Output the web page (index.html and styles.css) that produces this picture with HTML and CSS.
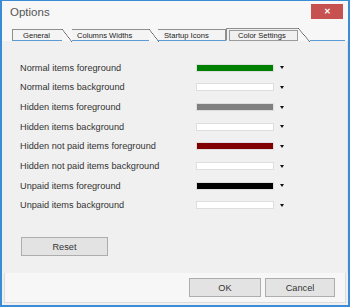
FILE: index.html
```html
<!DOCTYPE html>
<html lang="en">
<head>
  <meta charset="UTF-8">
  <title>Options</title>
  <link rel="stylesheet" href="styles.css">
</head>
<body>

  <div class="window">
    <!-- Title bar -->
    <div class="titlebar">
      <span class="title">Options</span>
      <button class="close">&#x2715;</button>
    </div>

    <!-- Tabs -->
    <div class="tabs">
      <div class="tab tab-general">General</div>
      <div class="tab tab-columns">Columns Widths</div>
      <div class="tab tab-startup">Startup Icons</div>
      <div class="tab tab-color active"><span>Color Settings</span></div>
      <div class="tab-rest"></div>
    </div>

    <!-- Color settings -->
    <div class="panel">
      <div class="row">
        <span class="label">Normal items foreground</span>
        <span class="swatch" style="background: #008000"></span>
        <span class="arrow"></span>
      </div>
      <div class="row">
        <span class="label">Normal items background</span>
        <span class="swatch" style="background: #ffffff"></span>
        <span class="arrow"></span>
      </div>
      <div class="row">
        <span class="label">Hidden items foreground</span>
        <span class="swatch" style="background: #808080"></span>
        <span class="arrow"></span>
      </div>
      <div class="row">
        <span class="label">Hidden items background</span>
        <span class="swatch" style="background: #ffffff"></span>
        <span class="arrow"></span>
      </div>
      <div class="row">
        <span class="label">Hidden not paid items foreground</span>
        <span class="swatch" style="background: #800000"></span>
        <span class="arrow"></span>
      </div>
      <div class="row">
        <span class="label">Hidden not paid items background</span>
        <span class="swatch" style="background: #ffffff"></span>
        <span class="arrow"></span>
      </div>
      <div class="row">
        <span class="label">Unpaid items foreground</span>
        <span class="swatch" style="background: #000000"></span>
        <span class="arrow"></span>
      </div>
      <div class="row">
        <span class="label">Unpaid items background</span>
        <span class="swatch" style="background: #ffffff"></span>
        <span class="arrow"></span>
      </div>

      <button class="btn btn-reset">Reset</button>
    </div>

    <!-- Dialog buttons -->
    <div class="footer">
      <button class="btn btn-ok">OK</button>
      <button class="btn btn-cancel">Cancel</button>
    </div>
  </div>

</body>
</html>
```

FILE: styles.css
```css
body {
  margin: 0;
  font-family: "Liberation Sans", Arial, sans-serif;
  background: #ffffff;
}

.window {
  width: 350px;
  height: 307px;
  box-sizing: border-box;
  border: 2px solid #3c8bd6;
  border-top-width: 1px;
  background: #f0f0f0;
  display: flex;
  flex-direction: column;
}

.titlebar {
  height: 24px;
  display: flex;
  align-items: flex-start;
  background: #f7f7f7;
}

.title {
  margin: 5px 0 0 8px;
  font-size: 11.5px;
  color: #555;
}

.close {
  margin: 3px 5px 0 auto;
  width: 32px;
  height: 15px;
  padding: 0;
  border: none;
  background: #c75050;
  color: #fff;
  font-size: 8px;
  font-weight: bold;
  line-height: 15px;
}

.tabs {
  display: flex;
  align-items: flex-end;
  height: 14px;
  padding: 2px 0 0 10px;
  background: #f7f7f7;
}

.tab {
  position: relative;
  height: 12px;
  box-sizing: border-box;
  border-top: 1px solid #8f8f8f;
  border-bottom: 1px solid #5b9bd5;
  background: #f4f4f4;
  font-size: 7.6px;
  color: #222;
  line-height: 11px;
  padding-left: 10px;
}

.tab::after {
  content: "";
  position: absolute;
  top: -1px;
  right: -10px;
  width: 10px;
  height: 13px;
  background: linear-gradient(to top right, transparent calc(50% - 0.6px), #555 50%, transparent calc(50% + 0.6px));
}

.tab-general {
  width: 50px;
  border-left: 1px solid #8f8f8f;
  margin-right: 10px;
}

.tab-columns {
  width: 77px;
  margin-right: 9px;
  padding-left: 5px;
}

.tab-startup {
  width: 68px;
  padding-left: 6px;
  border-right: 1px solid #8f8f8f;
}

.tab-startup::after {
  display: none;
}

.tab-color {
  width: 72px;
  height: 13px;
  border-left: 1px solid #8f8f8f;
  border-bottom-color: #f0f0f0;
  padding: 1px 0 0 2px;
  background: #f0f0f0;
  margin-right: 12px;
}

.tab-color::after {
  top: -1px;
  right: -12px;
  width: 12px;
  height: 14px;
}

.tab-color span {
  display: block;
  height: 9px;
  border: 1px solid #9a9a9a;
  line-height: 9px;
  padding-left: 8px;
}

.tab-rest {
  flex: 1;
  height: 1px;
  background: #5b9bd5;
  margin-right: 3px;
}

.panel {
  flex: 1;
  padding: 17px 0 0 18px;
  background: #f0f0f0;
  border-right: 1px solid #e4e4e4;
}

.row {
  display: flex;
  align-items: center;
  height: 19.65px;
}

.label {
  width: 176px;
  font-size: 9.2px;
  color: #333;
}

.swatch {
  width: 78px;
  height: 8px;
  box-sizing: border-box;
  border: 1px solid #dedede;
}

.arrow {
  margin-left: 6px;
  width: 0;
  height: 0;
  border-left: 2.5px solid transparent;
  border-right: 2.5px solid transparent;
  border-top: 3px solid #111;
}

.btn {
  height: 19px;
  padding: 0;
  border: 1px solid #adadad;
  background: #e3e3e3;
  font-family: "Liberation Sans", Arial, sans-serif;
  font-size: 9.2px;
  color: #333;
}

.btn-reset {
  width: 87px;
  margin: 22px 0 0 1px;
}

.footer {
  height: 30px;
  display: flex;
  align-items: flex-start;
  padding: 5px 0 0 184px;
  box-sizing: border-box;
  background: #f7f7f7;
  border: 1px solid #dcdcdc;
  border-top: none;
  margin: 0 2px 2px 2px;
}

.btn-ok {
  width: 72px;
}

.btn-cancel {
  width: 70px;
  margin-left: 4px;
}
```
